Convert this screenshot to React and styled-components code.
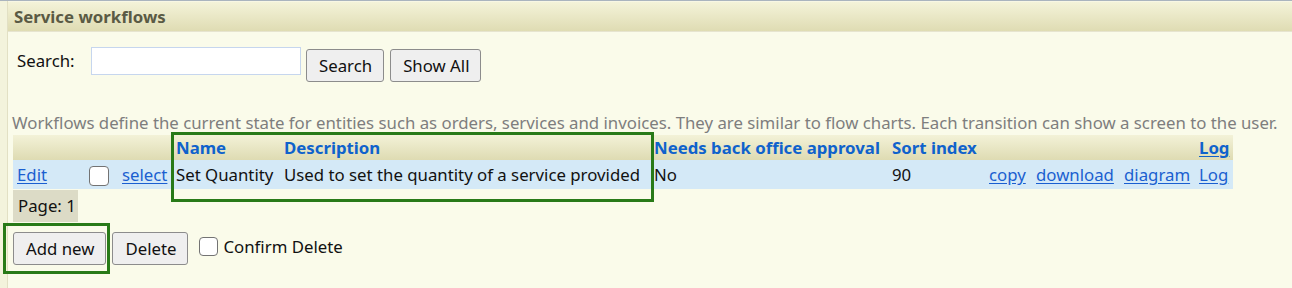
import React from "react";
import styled, { createGlobalStyle } from "styled-components";

const GlobalStyle = createGlobalStyle`
  html, body {
    margin: 0;
    background: #fafbea;
  }
  body {
    font-family: "Noto Sans", "Open Sans", sans-serif;
    font-size: 16.8px;
    color: #111;
  }
`;

const Page = styled.div`
  min-height: 288px;
  border-top: 1px solid #aab4be;
  padding-left: 7px;
  background: #f3f3dc;
`;

const Panel = styled.div`
  min-height: 287px;
  border-left: 1px solid #e2e0c4;
  background: #fafbea;
`;

const Header = styled.div`
  height: 29px;
  border-top: 1px solid #f8f7e4;
  border-bottom: 1px solid #e6e4cf;
  background: linear-gradient(#f4f3d9, #dfdcb3);
  display: flex;
  align-items: center;
  padding-left: 6px;
  font-weight: 700;
  color: #5a5a44;
`;

const Body = styled.div`
  position: relative;
  padding: 15px 0 0 4px;
`;

const SearchRow = styled.form`
  display: flex;
  align-items: flex-start;
  padding-left: 5px;
  height: 34px;
`;

const Label = styled.label`
  line-height: 28px;
  width: 74px;
  flex: none;
`;

const Input = styled.input`
  box-sizing: border-box;
  width: 210px;
  height: 28px;
  border: 1px solid #c6d6ee;
  background: #fff;
  margin: 0 5px 0 0;
  outline: none;
`;

const Button = styled.button`
  box-sizing: border-box;
  height: 33px;
  margin: ${p => (p.$top ? "2px" : "0")} 6px 0 0;
  padding: 0 11px 0 12px;
  font-family: inherit;
  font-size: 16.8px;
  color: #111;
  background: #efefef;
  border: 1px solid #8c8c8c;
  border-radius: 3px;
`;

const Intro = styled.p`
  margin: 32px 0 2px;
  line-height: 20px;
  color: #7e7e7e;
  white-space: nowrap;
`;

const Grid = styled.table`
  margin-left: 1px;
  width: 1220px;
  table-layout: fixed;
  border-collapse: collapse;
`;

const HeadRow = styled.tr`
  height: 25px;
  background: linear-gradient(#f3f2d8, #dedbb2);
`;

const Row = styled.tr`
  height: 29px;
  background: #d4e9f7;
`;

const Th = styled.th`
  padding: 0 0 0 4px;
  text-align: left;
  font-weight: 700;
  color: #0f62cc;
  white-space: nowrap;
`;

const Td = styled.td`
  padding: 0 0 0 4px;
  white-space: nowrap;
`;

const Link = styled.a`
  text-decoration: underline;
  text-underline-offset: 2px;
  cursor: pointer;
  font-weight: inherit;
  color: ${p => (p.$head ? "#0f62cc" : "#1a5fd0")};
`;

const Check = styled.input.attrs({ type: "checkbox" })`
  appearance: none;
  box-sizing: border-box;
  width: ${p => p.$size}px;
  height: ${p => p.$size}px;
  margin: 0;
  border: 1.5px solid #737373;
  border-radius: 4px;
  background: #fff;
  vertical-align: middle;
`;

const Pager = styled.div`
  margin: 1px 0 0 1px;
  width: 65px;
  height: 32px;
  background: #dcdbc6;
  box-sizing: border-box;
  padding-left: 5px;
  line-height: 32px;
`;

const Actions = styled.div`
  display: flex;
  align-items: center;
  margin: 10px 0 0 1px;
`;

const ConfirmLabel = styled.label`
  display: flex;
  align-items: center;
  gap: 5px;
  margin-left: 5px;
  margin-top: -5px;
`;

const Highlight = styled.div`
  position: absolute;
  box-sizing: border-box;
  border: 3px solid #287a18;
  pointer-events: none;
`;

const widths = [72, 33, 54, 108, 370, 238, 97, 47, 88, 75, 38];

export default function App() {
  return (
    <Page>
      <GlobalStyle />
      <Panel>
        <Header>Service workflows</Header>
        <Body>
          <SearchRow onSubmit={e => e.preventDefault()}>
            <Label htmlFor="q">Search:</Label>
            <Input id="q" type="text" />
            <Button $top>Search</Button>
            <Button $top>Show All</Button>
          </SearchRow>
          <Intro>
            Workflows define the current state for entities such as orders, services and invoices. They are similar to flow charts. Each transition can show a screen to the user.
          </Intro>
          <Grid>
            <colgroup>
              {widths.map((w, i) => (
                <col key={i} style={{ width: w }} />
              ))}
            </colgroup>
            <thead>
              <HeadRow>
                <Th />
                <Th />
                <Th />
                <Th>Name</Th>
                <Th>Description</Th>
                <Th>Needs back office approval</Th>
                <Th>Sort index</Th>
                <Th />
                <Th />
                <Th />
                <Th>
                  <Link $head>Log</Link>
                </Th>
              </HeadRow>
            </thead>
            <tbody>
              <Row>
                <Td>
                  <Link>Edit</Link>
                </Td>
                <Td>
                  <Check $size={20} />
                </Td>
                <Td>
                  <Link>select</Link>
                </Td>
                <Td>Set Quantity</Td>
                <Td>Used to set the quantity of a service provided</Td>
                <Td>No</Td>
                <Td>90</Td>
                <Td>
                  <Link>copy</Link>
                </Td>
                <Td>
                  <Link>download</Link>
                </Td>
                <Td>
                  <Link>diagram</Link>
                </Td>
                <Td>
                  <Link>Log</Link>
                </Td>
              </Row>
            </tbody>
          </Grid>
          <Pager>Page: 1</Pager>
          <Actions>
            <Button>Add new</Button>
            <Button>Delete</Button>
            <ConfirmLabel>
              <Check $size={19} />
              Confirm Delete
            </ConfirmLabel>
          </Actions>
          <Highlight style={{ left: 163, top: 100, width: 483, height: 70 }} />
          <Highlight style={{ left: -5, top: 191, width: 107, height: 51 }} />
        </Body>
      </Panel>
    </Page>
  );
}
